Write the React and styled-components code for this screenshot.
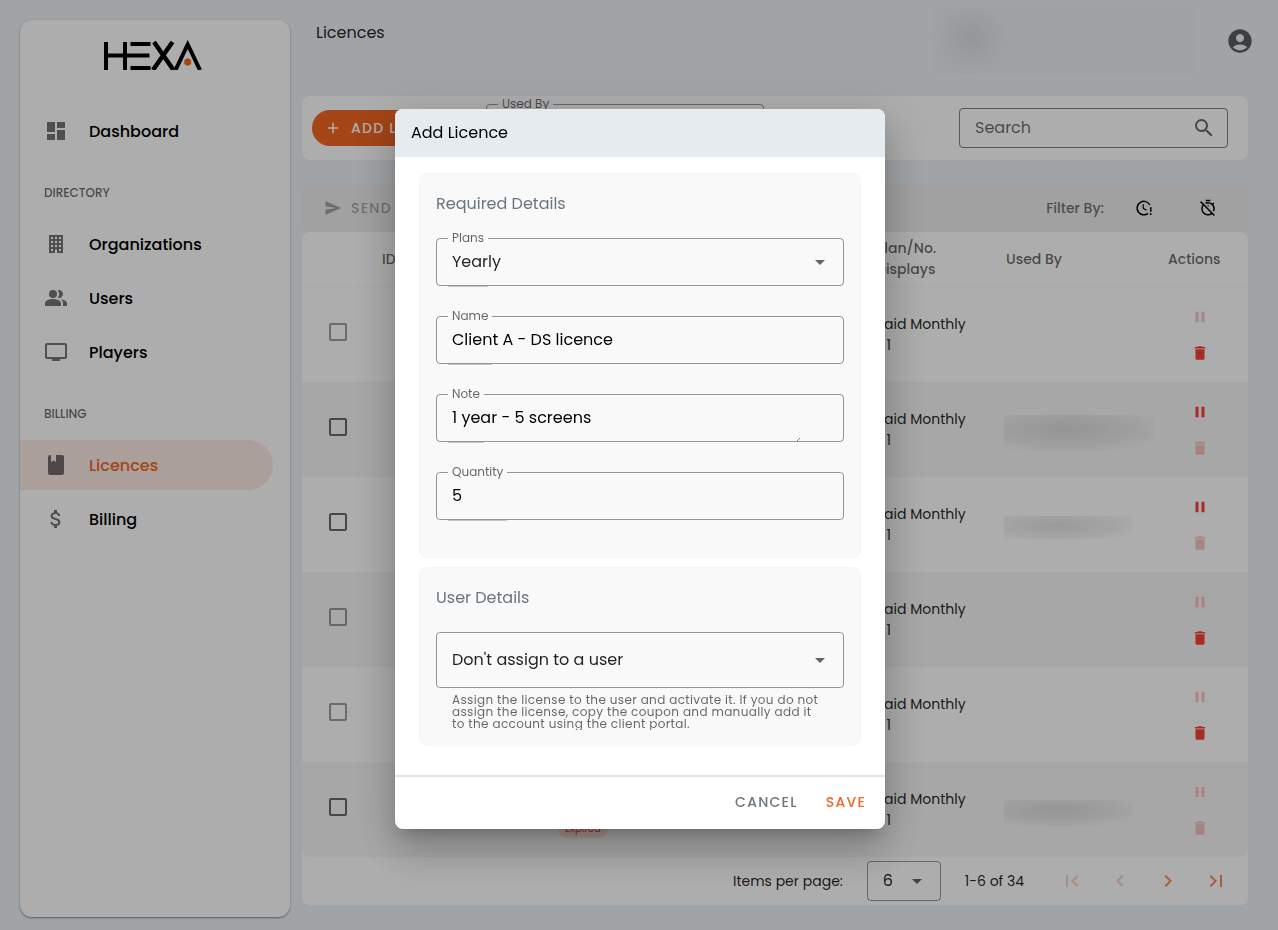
import React from "react";
import styled, { createGlobalStyle, css } from "styled-components";
import {
  MdAccountCircle,
  MdAdd,
  MdAttachMoney,
  MdChevronLeft,
  MdChevronRight,
  MdDashboard,
  MdDelete,
  MdFirstPage,
  MdLastPage,
  MdOutlineTimerOff,
  MdPause,
  MdPeopleAlt,
  MdSearch,
  MdSend,
  MdTv,
} from "react-icons/md";

const GlobalStyle = createGlobalStyle`
  *, *::before, *::after { box-sizing: border-box; }
  body {
    margin: 0;
    background: #ecf2f6;
    color: rgba(0, 0, 0, 0.87);
    font-family: Poppins, Inter, "Open Sans", sans-serif;
    font-size: 14px;
  }
  button, input, select, textarea { font: inherit; color: inherit; }
  svg { display: block; flex: none; }
`;

const orange = "#f26522";
const red = "#f44336";

const Page = styled.div`
  display: flex;
  gap: 12px;
  min-height: 100vh;
`;

/* Sidebar */

const Sidebar = styled.aside`
  flex: none;
  width: 270px;
  margin: 20px 0 13px 20px;
  padding-top: 20px;
  border-radius: 12px;
  background: #fff;
  box-shadow: 0 1px 2px rgba(50, 70, 90, 0.6);
`;

const LogoLink = styled.a`
  display: flex;
  justify-content: center;
  height: 66px;
  padding-right: 4px;
`;

const Nav = styled.nav`
  display: flex;
  flex-direction: column;
`;

const NavHeading = styled.h2`
  margin: 0;
  padding: 28px 24px 17px;
  font-size: 12px;
  font-weight: 500;
  line-height: 18px;
  color: rgba(0, 0, 0, 0.6);
`;

const NavList = styled.ul`
  display: flex;
  flex-direction: column;
  gap: 4px;
  margin: 0;
  padding: 0;
  list-style: none;
`;

const NavLink = styled.a`
  display: flex;
  align-items: center;
  gap: 21px;
  height: 50px;
  margin-right: 17px;
  padding-left: 24px;
  border-radius: 0 25px 25px 0;
  background: ${(p) => (p.$active ? "#fdebe6" : "transparent")};
  color: ${(p) => (p.$active ? orange : "#000")};
  font-size: 16px;
  font-weight: 500;
  text-decoration: none;

  svg { color: rgba(0, 0, 0, 0.54); }
`;

/* Main column */

const Main = styled.main`
  flex: 1;
  min-width: 0;
`;

const Header = styled.header`
  display: flex;
  align-items: center;
  height: 82px;
  margin-bottom: 14px;
  padding: 0 18px 0 14px;
`;

const PageTitle = styled.h1`
  align-self: flex-start;
  margin: 20px auto 0 0;
  font-size: 16px;
  font-weight: 400;
  line-height: 26px;
`;

const HeaderRedaction = styled.div`
  width: 264px;
  height: 66px;
  margin-right: 25px;
  background: radial-gradient(circle at 40px 30px, rgba(0, 0, 0, 0.08), rgba(0, 0, 0, 0.01) 38px);
`;

const ProfileButton = styled.button`
  display: grid;
  place-items: center;
  width: 40px;
  height: 40px;
  padding: 0;
  border: 0;
  background: none;
  color: rgba(0, 0, 0, 0.62);
`;

const Content = styled.div`
  padding-right: 30px;
`;

const Toolbar = styled.div`
  display: flex;
  align-items: center;
  gap: 24px;
  height: 64px;
  margin-bottom: 24px;
  padding: 0 20px 0 10px;
  border-radius: 8px;
  background: #fff;
`;

const ActionButton = styled.button`
  display: flex;
  align-items: center;
  gap: 9px;
  width: 150px;
  height: 36px;
  padding: 0 12px;
  border: 0;
  border-radius: 18px;
  background: ${(p) => (p.$filled ? orange : "transparent")};
  color: ${(p) => (p.$filled ? "#fff" : "rgba(0, 0, 0, 0.32)")};
  font-weight: 500;
  letter-spacing: 0.09em;
  text-transform: uppercase;
  white-space: nowrap;
`;

const SearchBox = styled.label`
  display: flex;
  align-items: center;
  width: 269px;
  height: 40px;
  margin-left: auto;
  padding: 0 11px 0 15px;
  border: 1px solid rgba(0, 0, 0, 0.5);
  border-radius: 4px;
  color: rgba(0, 0, 0, 0.6);
`;

const SearchInput = styled.input`
  flex: 1;
  min-width: 0;
  padding: 0 0 2px;
  border: 0;
  outline: 0;
  background: none;
  font-size: 16px;

  &::placeholder { color: rgba(0, 0, 0, 0.6); opacity: 1; }
`;

const FilterBar = styled.div`
  display: flex;
  align-items: center;
  height: 48px;
  padding: 0 16px 0 10px;
  border-radius: 8px;
  background: #eee;
`;

const FilterLabel = styled.span`
  margin-left: auto;
  margin-right: 16px;
  font-weight: 500;
  color: #6c757d;
`;

const FilterButton = styled.button`
  display: grid;
  place-items: center;
  width: 48px;
  height: 48px;
  margin-left: ${(p) => (p.$spaced ? "16px" : 0)};
  padding: 0;
  border: 0;
  background: none;
  color: #000;
`;

/* Table */

const TableCard = styled.section`
  border-radius: 8px;
  background: #fff;
`;

const Table = styled.table`
  width: 100%;
  table-layout: fixed;
  border-collapse: separate;
  border-spacing: 0;
`;

const Th = styled.th`
  width: ${(p) => p.$width || "auto"};
  height: 55px;
  padding: 0 16px;
  border-bottom: 1px solid #f9f9f9;
  font-weight: 500;
  line-height: 21px;
  text-align: left;
  color: rgba(0, 0, 0, 0.6);
`;

const Row = styled.tr`
  background: ${(p) => (p.$shaded ? "#f7f7f7" : "#fff")};
`;

const Td = styled.td`
  height: 95px;
  padding: ${(p) => (p.$low ? "0 16px 19px" : "0 16px")};
  vertical-align: ${(p) => (p.$low ? "bottom" : "middle")};
  line-height: 21px;

  ${Row}:last-child &:first-child { border-bottom-left-radius: 8px; }
  ${Row}:last-child &:last-child { border-bottom-right-radius: 8px; }
`;

const CheckTd = styled(Td)`
  padding: 0 0 6px 27px;
`;

const CheckBox = styled.input`
  display: block;
  appearance: none;
  width: 18px;
  height: 18px;
  margin: 0;
  border: 2px solid rgba(0, 0, 0, 0.58);
  border-radius: 2px;

  &:disabled { border-color: rgba(0, 0, 0, 0.38); }
`;

const Chip = styled.span`
  display: inline-block;
  padding: 0 7px;
  border-radius: 9px;
  background: #fbdcdc;
  color: #e53935;
  font-size: 10px;
  line-height: 18px;
  vertical-align: bottom;
`;

const Redaction = styled.div`
  width: ${(p) => p.$width};
  height: ${(p) => p.$height};
  margin: 6px 0 0 -2px;
  background: radial-gradient(ellipse at 42% 40%, rgba(0, 0, 0, 0.11), rgba(0, 0, 0, 0.05) 55%, transparent 85%);
`;

const RowActions = styled.div`
  display: flex;
  flex-direction: column;
  align-items: center;
`;

const RowButton = styled.button`
  display: grid;
  place-items: center;
  width: 36px;
  height: 36px;
  padding: 0;
  border: 0;
  background: none;
  color: ${red};

  &:disabled { opacity: 0.3; }
`;

const Paginator = styled.div`
  display: flex;
  align-items: center;
  justify-content: flex-end;
  height: 48px;
  padding-right: 8px;
`;

const PageSizeLabel = styled.label`
  margin-right: 24px;
`;

const RangeText = styled.span`
  margin: 0 24px;
`;

const PageButton = styled.button`
  display: grid;
  place-items: center;
  width: 48px;
  height: 48px;
  padding: 0;
  border: 0;
  background: none;
  color: ${orange};
  opacity: 0.75;

  &:disabled { opacity: 0.3; }
`;

/* Outlined form fields */

const FieldBox = styled.div`
  position: relative;
  flex: none;
  display: flex;
  width: ${(p) => p.$width || "auto"};
  height: ${(p) => p.$height || "48px"};
  border: 1px solid rgba(0, 0, 0, 0.4);
  border-radius: 4px;
`;

const FieldLabel = styled.label`
  position: absolute;
  left: 11px;
  top: -9px;
  bottom: -2px;
  padding: 0 4px;
  border-bottom: 1px solid #c6c6c6;
  background: linear-gradient(${(p) => p.$surface}, ${(p) => p.$surface}) top / 100% 16px no-repeat;
  color: rgba(0, 0, 0, 0.6);
  font-size: 12px;
  line-height: 16px;
  pointer-events: none;
`;

const controlStyle = css`
  flex: 1;
  width: 100%;
  min-width: 0;
  margin: 0;
  padding: 0 15px 2px;
  border: 0;
  outline: 0;
  background: none;
  color: rgba(0, 0, 0, 0.87);
  font-size: 16px;
`;

const TextInput = styled.input`
  ${controlStyle}
  color: #000;
`;

const TextArea = styled.textarea`
  ${controlStyle}
  padding: 11px 15px;
  color: #000;
  line-height: 24px;
  resize: none;
  overflow: hidden;
`;

const SelectInput = styled.select`
  ${controlStyle}
  appearance: none;
`;

const Caret = styled.svg`
  position: absolute;
  right: 18px;
  top: calc(50% - 2px);
  width: 10px;
  height: 5px;
  fill: rgba(0, 0, 0, 0.6);
  pointer-events: none;
`;

const ResizeGrip = styled.svg`
  position: absolute;
  right: 43px;
  bottom: 0;
  width: 3px;
  height: 3px;
  stroke: #555;
  pointer-events: none;
`;

/* Dialog */

const Scrim = styled.div`
  position: fixed;
  inset: 0;
  display: flex;
  align-items: center;
  justify-content: center;
  padding: 8px 0 0 2px;
  background: rgba(0, 0, 0, 0.32);
`;

const Dialog = styled.form`
  width: 490px;
  overflow: hidden;
  border-radius: 8px;
  background: #fff;
  box-shadow:
    0 11px 15px -7px rgba(0, 0, 0, 0.2),
    0 24px 38px 3px rgba(0, 0, 0, 0.14),
    0 9px 46px 8px rgba(0, 0, 0, 0.12);
`;

const DialogTitle = styled.h2`
  margin: 0;
  padding: 0 16px;
  background: #e6ebef;
  color: #000;
  font-size: 16px;
  font-weight: 400;
  line-height: 48px;
`;

const DialogBody = styled.div`
  display: flex;
  flex-direction: column;
  gap: 9px;
  padding: 16px 24px 29px;
`;

const Panel = styled.section`
  padding: 16px 16px 7px;
  border: 1px solid #f6f6f6;
  border-radius: 8px;
  background: #f9f9f9;
`;

const PanelTitle = styled.h3`
  margin: 0 0 20px;
  color: #6c757d;
  font-size: 16px;
  font-weight: 400;
  line-height: 28px;
`;

const Fields = styled.div`
  display: flex;
  flex-direction: column;
  gap: 30px;
  padding-bottom: 30px;
`;

const Hint = styled.p`
  height: 36px;
  margin: 6px 22px 8px 16px;
  overflow: hidden;
  color: rgba(0, 0, 0, 0.6);
  font-size: 12px;
  letter-spacing: 0.03em;
  line-height: 12px;
`;

const DialogActions = styled.footer`
  display: flex;
  align-items: center;
  justify-content: flex-end;
  gap: 12px;
  height: 54px;
  padding: 0 11px 2px 0;
  border-top: 2px solid #e4e4e4;
`;

const TextButton = styled.button`
  height: 36px;
  padding: 0 8px;
  border: 0;
  background: none;
  color: ${(p) => (p.$primary ? orange : "#6c757d")};
  font-weight: 500;
  letter-spacing: 0.09em;
  text-transform: uppercase;
`;

function Logo() {
  return (
    <svg width="98" height="30" viewBox="0 0 98 30" role="img" aria-label="Hexa" fill="none" stroke="#000" strokeWidth="4">
      <path d="M2 2v28M21 2v28M0 15.500h45.500M26.500 4h20M26.500 28h20" />
      <path d="M50 2l19.500 28M68.500 2L49 30" strokeWidth="4.500" />
      <path d="M71.500 30L83.700 4.500L96 30" strokeMiterlimit="8" />
      <path d="M83.700 18l3.400 2v4l-3.400 2l-3.400-2v-4z" fill={orange} stroke="none" />
    </svg>
  );
}

function BuildingIcon() {
  return (
    <svg width="24" height="24" viewBox="0 0 24 24" fill="currentColor">
      <path d="M5 3v18h6v-3.500h2V21h6V3H5m2 2h2v2H7V5m4 0h2v2h-2V5m4 0h2v2h-2V5M7 9h2v2H7V9m4 0h2v2h-2V9m4 0h2v2h-2V9m-8 4h2v2H7v-2m4 0h2v2h-2v-2m4 0h2v2h-2v-2m-8 4h2v2H7v-2m8 0h2v2h-2v-2z" />
    </svg>
  );
}

function BookIcon() {
  return (
    <svg width="24" height="24" viewBox="0 0 24 24" fill="currentColor">
      <path d="M18 22a2 2 0 0 0 2-2V4a2 2 0 0 0-2-2h-6v7L9.500 7.500L7 9V2H6a2 2 0 0 0-2 2v16a2 2 0 0 0 2 2h12z" />
    </svg>
  );
}

function ClockAlertIcon() {
  return (
    <svg width="18" height="18" viewBox="0 0 24 24" fill="none" stroke="currentColor" strokeWidth="2">
      <path d="M17.500 19.100A9 9 0 1 1 19.800 8" />
      <path d="M11 7v5.500l4.300 2.500" strokeWidth="1.600" />
      <path d="M21 11v6M21 19v2.200" />
    </svg>
  );
}

function Dropdown({ id, label, children }) {
  return (
    <>
      <SelectInput id={id} aria-label={label}>
        {children}
      </SelectInput>
      <Caret viewBox="0 0 10 5">
        <path d="M0 0h10L5 5z" />
      </Caret>
    </>
  );
}

function NavItem({ icon, label, active }) {
  return (
    <li>
      <NavLink href="#" $active={active} aria-current={active ? "page" : undefined}>
        {icon}
        {label}
      </NavLink>
    </li>
  );
}

const rows = [
  { deletable: true },
  { selectable: true, pausable: true, user: ["150px", "36px"] },
  { selectable: true, pausable: true, user: ["128px", "24px"] },
  { deletable: true },
  { deletable: true },
  { selectable: true, status: "Expired", user: ["128px", "26px"] },
];

function LicenceRow({ row, index }) {
  return (
    <Row $shaded={index % 2 === 1}>
      <CheckTd>
        <CheckBox type="checkbox" aria-label={`Select row ${index + 1}`} disabled={!row.selectable} />
      </CheckTd>
      <Td />
      <Td $low>{row.status && <Chip>{row.status}</Chip>}</Td>
      <Td>
        Paid Monthly
        <br />/ 1
      </Td>
      <Td>{row.user && <Redaction $width={row.user[0]} $height={row.user[1]} />}</Td>
      <Td>
        <RowActions>
          <RowButton aria-label="Pause" disabled={!row.pausable}>
            <MdPause size={18} />
          </RowButton>
          <RowButton aria-label="Delete" disabled={!row.deletable}>
            <MdDelete size={18} />
          </RowButton>
        </RowActions>
      </Td>
    </Row>
  );
}

export default function App() {
  return (
    <>
      <GlobalStyle />
      <Page>
        <Sidebar>
          <LogoLink href="#">
            <Logo />
          </LogoLink>
          <Nav>
            <NavList>
              <NavItem icon={<MdDashboard size={24} />} label="Dashboard" />
            </NavList>
            <NavHeading>DIRECTORY</NavHeading>
            <NavList>
              <NavItem icon={<BuildingIcon />} label="Organizations" />
              <NavItem icon={<MdPeopleAlt size={24} />} label="Users" />
              <NavItem icon={<MdTv size={24} />} label="Players" />
            </NavList>
            <NavHeading>BILLING</NavHeading>
            <NavList>
              <NavItem icon={<BookIcon />} label="Licences" active />
              <NavItem icon={<MdAttachMoney size={24} />} label="Billing" />
            </NavList>
          </Nav>
        </Sidebar>

        <Main>
          <Header>
            <PageTitle>Licences</PageTitle>
            <HeaderRedaction />
            <ProfileButton aria-label="Account">
              <MdAccountCircle size={28} />
            </ProfileButton>
          </Header>

          <Content>
            <Toolbar>
              <ActionButton $filled>
                <MdAdd size={18} />
                Add Licence
              </ActionButton>
              <FieldBox $width="278px">
                <FieldLabel htmlFor="used-by" $surface="#fff">
                  Used By
                </FieldLabel>
                <Dropdown id="used-by">
                  <option />
                </Dropdown>
              </FieldBox>
              <SearchBox>
                <SearchInput type="search" placeholder="Search" aria-label="Search" />
                <MdSearch size={24} />
              </SearchBox>
            </Toolbar>

            <FilterBar>
              <ActionButton disabled>
                <MdSend size={18} />
                Send
              </ActionButton>
              <FilterLabel>Filter By:</FilterLabel>
              <FilterButton aria-label="Expiring soon">
                <ClockAlertIcon />
              </FilterButton>
              <FilterButton aria-label="Expired" $spaced>
                <MdOutlineTimerOff size={18} />
              </FilterButton>
            </FilterBar>

            <TableCard>
              <Table>
                <thead>
                  <tr>
                    <Th $width="64px" />
                    <Th $width="176px">ID</Th>
                    <Th />
                    <Th $width="130px">
                      Plan/No.
                      <br />
                      Displays
                    </Th>
                    <Th $width="162px">Used By</Th>
                    <Th $width="96px">Actions</Th>
                  </tr>
                </thead>
                <tbody>
                  {rows.map((row, i) => (
                    <LicenceRow key={i} row={row} index={i} />
                  ))}
                </tbody>
              </Table>
              <Paginator>
                <PageSizeLabel htmlFor="page-size">Items per page:</PageSizeLabel>
                <FieldBox $width="74px" $height="40px">
                  <Dropdown id="page-size">
                    <option>6</option>
                  </Dropdown>
                </FieldBox>
                <RangeText>1-6 of 34</RangeText>
                <PageButton aria-label="First page" disabled>
                  <MdFirstPage size={24} />
                </PageButton>
                <PageButton aria-label="Previous page" disabled>
                  <MdChevronLeft size={24} />
                </PageButton>
                <PageButton aria-label="Next page">
                  <MdChevronRight size={24} />
                </PageButton>
                <PageButton aria-label="Last page">
                  <MdLastPage size={24} />
                </PageButton>
              </Paginator>
            </TableCard>
          </Content>
        </Main>
      </Page>

      <Scrim>
        <Dialog role="dialog" aria-labelledby="dialog-title">
          <DialogTitle id="dialog-title">Add Licence</DialogTitle>
          <DialogBody>
            <Panel>
              <PanelTitle>Required Details</PanelTitle>
              <Fields>
                <FieldBox>
                  <FieldLabel htmlFor="plan" $surface="#f9f9f9">
                    Plans
                  </FieldLabel>
                  <Dropdown id="plan">
                    <option>Yearly</option>
                  </Dropdown>
                </FieldBox>
                <FieldBox>
                  <FieldLabel htmlFor="name" $surface="#f9f9f9">
                    Name
                  </FieldLabel>
                  <TextInput id="name" defaultValue="Client A - DS licence" />
                </FieldBox>
                <FieldBox>
                  <FieldLabel htmlFor="note" $surface="#f9f9f9">
                    Note
                  </FieldLabel>
                  <TextArea id="note" rows={1} defaultValue="1 year - 5 screens" />
                  <ResizeGrip viewBox="0 0 4 4">
                    <path d="M0 4L4 0" />
                  </ResizeGrip>
                </FieldBox>
                <FieldBox>
                  <FieldLabel htmlFor="quantity" $surface="#f9f9f9">
                    Quantity
                  </FieldLabel>
                  <TextInput id="quantity" inputMode="numeric" defaultValue="5" />
                </FieldBox>
              </Fields>
            </Panel>
            <Panel>
              <PanelTitle>User Details</PanelTitle>
              <FieldBox $height="56px">
                <Dropdown id="assignee" label="User">
                  <option>Don't assign to a user</option>
                </Dropdown>
              </FieldBox>
              <Hint>
                Assign the license to the user and activate it. If you do not assign the license,
                copy the coupon and manually add it to the account using the client portal.
              </Hint>
            </Panel>
          </DialogBody>
          <DialogActions>
            <TextButton type="button">Cancel</TextButton>
            <TextButton type="button" $primary>
              Save
            </TextButton>
          </DialogActions>
        </Dialog>
      </Scrim>
    </>
  );
}
